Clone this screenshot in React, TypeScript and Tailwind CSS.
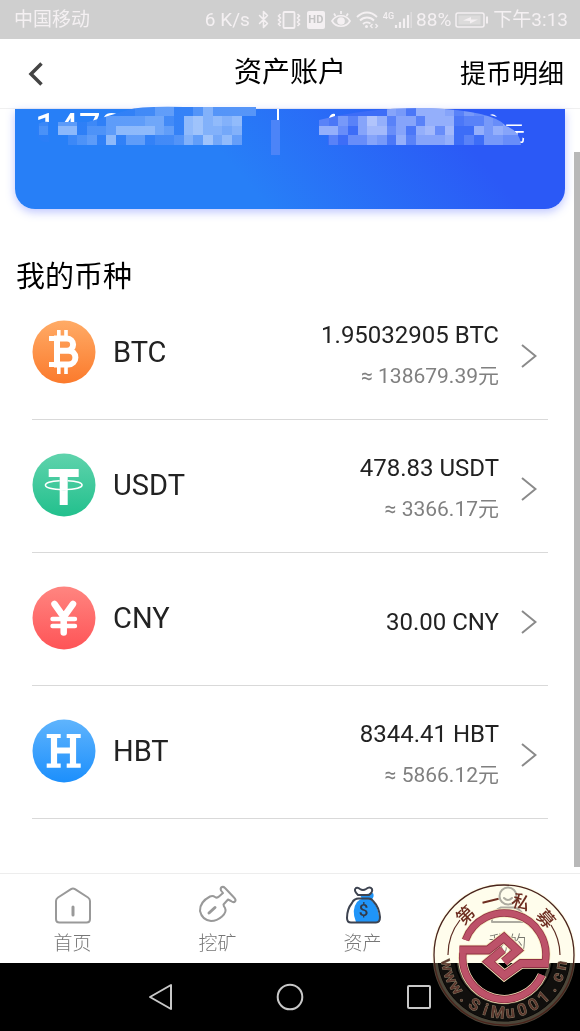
import type { ReactNode } from 'react';
import { Bluetooth } from 'lucide-react';

type Coin = {
    name: string;
    amount: string;
    approx?: string;
    from: string;
    to: string;
    glyph: ReactNode;
};

const coins: Coin[] = [
    {
        name: 'BTC',
        amount: '1.95032905 BTC',
        approx: '≈ 138679.39元',
        from: '#ffab66',
        to: '#fb7a2c',
        glyph: (
            <g fill="none" stroke="#fff">
                <path d="M26.8 10v8M34 10v8M26.8 46v8M34 46v8" strokeWidth="3.6" />
                <path d="M17 18.5h8M17 44.5h8" strokeWidth="5" />
                <path d="M25 18.5h10a6 6 0 0 1 0 12.2H25zM25 30.7h11.5a6.8 6.8 0 0 1 0 13.8H25z" strokeWidth="6" />
            </g>
        ),
    },
    {
        name: 'USDT',
        amount: '478.83 USDT',
        approx: '≈ 3366.17元',
        from: '#5fd3ac',
        to: '#22c08d',
        glyph: (
            <g>
                <path d="M16.7 16h30v8h-11v28h-8V24h-11z" fill="#fff" />
                <path d="M27 36.4q5 .6 9.5 0" fill="none" stroke="#43c99d" strokeWidth="1" />
                <path d="M27.7 27.7C9 28 7 36.5 31.7 36.5s23-8.5 4-8.8" fill="none" stroke="#fff" strokeWidth="1.5" />
            </g>
        ),
    },
    {
        name: 'CNY',
        amount: '30.00 CNY',
        from: '#ff8580',
        to: '#fe5457',
        glyph: (
            <g fill="none" stroke="#fff" strokeLinecap="round" strokeLinejoin="round">
                <path d="M22.5 18l9.2 13 9.300-13M31.700 31v15.500" strokeWidth="6.500" />
                <path d="M20.500 33h22.500M20.500 40h22.500" strokeWidth="4.400" />
            </g>
        ),
    },
    {
        name: 'HBT',
        amount: '8344.41 HBT',
        approx: '≈ 5866.12元',
        from: '#5fb4fd',
        to: '#1c8ffc',
        glyph: (
            <g fill="none" stroke="#fff">
                <path d="M14.7 17h14M34.7 17h14M14.7 46.7h14M34.7 46.7h14" strokeWidth="4.2" />
                <path d="M22 17v30M41 17v30" strokeWidth="6.2" />
                <path d="M22 31.5h19" strokeWidth="6" />
            </g>
        ),
    },
];

// one string per row of blocks, each digit is how light the block is
const leftBlocks = { col: 4, rows: ['....0000001133002522222', '1.33.1.3333441.67565654', '2.660223666643067554565', '0..1230603301125374637'] };
const rightBlocks = { col: 33, rows: ['000000054166652433300', '214258625526661224355', '663057735167370064655', '.20335416255560204433'] };

const Blocks = ({ col, rows }: { col: number; rows: string[] }) => (
    <g fill="#fff">
        {rows.map((row, r) =>
            row.split('').map((level, c) => {
                const n = Number(level);
                if (!n) return null;
                return (
                    <rect
                        key={`${r}-${c}`}
                        x={(col + c) * 9.67}
                        y={(11 + r) * 9.67}
                        width="9.67"
                        height="9.67"
                        opacity={n * 0.075}
                        shapeRendering="crispEdges"
                    />
                );
            })
        )}
    </g>
);

const StatusBar = () => (
    <div className="h-[39px] shrink-0 bg-[#cfcfcf] text-[#f4f0f2] text-[19px] leading-none pl-3.5 pr-3 flex items-center justify-between whitespace-nowrap">
        <span>中国移动</span>
        <div className="flex items-center gap-1">
            <span>6 K/s</span>
            <Bluetooth size={19} strokeWidth={2} />
            <svg width="24" height="20" viewBox="0 0 24 20" fill="none" stroke="currentColor" strokeWidth="1.8">
                <rect x="6.5" y="2" width="11" height="16" rx="1" />
                <path d="M3.5 4l-2 2 2 2-2 2 2 2-2 2 2 2M20.5 4l2 2-2 2 2 2-2 2 2 2-2 2" strokeWidth="1.5" />
            </svg>
            <span className="w-[18px] h-[18px] mx-0.5 rounded-xs bg-[#f4f0f2] text-[#c4c4c4] text-[11px] font-bold flex items-center justify-center">HD</span>
            <svg width="20" height="20" viewBox="0 0 20 20" fill="none" stroke="currentColor" strokeWidth="1.7">
                <path d="M1 11c4-7 14-7 18 0-4 7-14 7-18 0zM10 4V1M4.5 6L3 3.5M15.5 6L17 3.5" />
                <circle cx="10" cy="11" r="3" fill="currentColor" />
            </svg>
            <svg width="24" height="20" viewBox="0 0 24 20" fill="none" stroke="currentColor" strokeWidth="1.8">
                <path d="M2 7c6-6 14-6 20 0M5 10.5c4-4 10-4 14 0M8 14c2-2 5-2 7.5-.5" />
                <circle cx="11.5" cy="16.5" r="1.5" fill="currentColor" stroke="none" />
                <path d="M17.5 14l-2 2 2 2M20.5 14l2 2-2 2" strokeWidth="1.3" />
            </svg>
            <div className="flex">
                <span className="text-[9px] leading-3 font-medium">4G</span>
                <svg width="18" height="20" viewBox="0 0 18 20" fill="none" stroke="currentColor" strokeWidth="2.2">
                    <path d="M2 18v-3M6 18v-6M10 18V8.5M14 18V5" />
                    <path d="M17.5 18V2" opacity=".4" />
                </svg>
            </div>
            <span>88%</span>
            <svg width="34" height="18" viewBox="0 0 34 18" fill="none" stroke="currentColor">
                <rect x="1" y="2" width="28" height="14" rx="2" strokeWidth="1.5" />
                <rect x="3.5" y="4.5" width="22" height="9" fill="currentColor" stroke="none" opacity=".35" />
                <path d="M8 9.5l8-3.500v2.500h7l-8 4V10z" fill="currentColor" stroke="none" />
                <path d="M32 5.500v7" strokeWidth="2" />
            </svg>
            <span>下午3:13</span>
        </div>
    </div>
);

const BalanceCard = () => (
    <section className="relative mx-[15px] h-[100px] rounded-b-[20px] bg-linear-[50deg,#277ff7_40%,#2b59f6_80%] shadow-[0_3px_10px_rgba(90,110,255,0.4)] text-white">
        <div className="flex items-start justify-between pl-5 pr-10 pt-[3px]">
            <span className="text-[39px] leading-8">1478</span>
            <span className="mt-2 text-[22px] leading-7">元</span>
        </div>
        <svg className="absolute left-0 -top-[4px] w-full" viewBox="15 105 550 60" aria-hidden="true">
            <defs>
                <clipPath id="smudgeLeft">
                    <path d="M38 124q5-3 11-2v20h-5q-7-3-7-9zM58 122h30l40-12q12-4 56-3h72v9h-14v29H68V135H58z" />
                </clipPath>
                <clipPath id="smudgeRight">
                    <path d="M319 120q50-13 110-12 65 3 77 18 14 5 15 19H328v-10h-9z" />
                </clipPath>
                <linearGradient id="smudgeBase">
                    <stop offset="0" stopColor="#2a7ef7" />
                    <stop offset="1" stopColor="#3b84f7" />
                </linearGradient>
            </defs>
            <path d="M278 109v12" stroke="#fff" strokeWidth="2" />
            <rect x="271" y="120" width="9" height="35" fill="#4c84f8" />
            <g clipPath="url(#smudgeLeft)">
                <rect x="30" y="105" width="240" height="45" fill="url(#smudgeBase)" />
                <Blocks {...leftBlocks} />
            </g>
            <g clipPath="url(#smudgeRight)">
                <rect x="310" y="105" width="220" height="45" fill="#3d6df7" />
                <Blocks {...rightBlocks} />
            </g>
            <path d="M329 118q2-5 6-4v2zM490 115q4-2 7 2z" fill="#fff" />
        </svg>
    </section>
);

const CoinRow = ({ coin }: { coin: Coin }) => (
    <li>
        <button className="w-full h-[133px] pb-[3px] pr-[11px] flex items-center border-b border-[#d9d9d9] text-left">
            <svg className="size-16 shrink-0" viewBox="0 0 64 64" aria-hidden="true">
                <defs>
                    <linearGradient id={`coin${coin.name}`} x2="0" y2="1">
                        <stop offset="0" stopColor={coin.from} />
                        <stop offset="1" stopColor={coin.to} />
                    </linearGradient>
                </defs>
                <circle cx="32" cy="32" r="31.5" fill={`url(#coin${coin.name})`} />
                {coin.glyph}
            </svg>
            <span className="ml-[17px] text-[29px] leading-9 text-[#222]">{coin.name}</span>
            <span className="ml-auto mt-2 flex flex-col gap-[9px] text-right">
                <span className="text-2xl text-[#222]">{coin.amount}</span>
                {coin.approx && <span className="text-[21px] leading-8 text-[#808080]">{coin.approx}</span>}
            </span>
            <svg className="ml-[22px] mt-2 w-4 h-6" viewBox="0 0 16 24" fill="none" stroke="#8a8a8a" strokeWidth="2" aria-hidden="true">
                <path d="M1 1l13.5 11L1 23" />
            </svg>
        </button>
    </li>
);

const tabs: { label: string; icon: ReactNode }[] = [
    {
        label: '首页',
        icon: (
            <g stroke="#999" strokeWidth="2">
                <path d="M5 11.5L18 3.2q2-1.3 4 0l13 8.3q2 1.3 2 3.5v18q0 3.5-3.5 3.5h-27Q3 36.5 3 33V15q0-2.2 2-3.5z" />
                <path d="M20 21v8" strokeWidth="3" />
            </g>
        ),
    },
    {
        label: '挖矿',
        icon: (
            <g stroke="#999" strokeWidth="2">
                <path d="M12 10.5q3-1 5 .5 2 1.500 4-.5l4-3.500-2-2.500q-1-2.500 1-3.500 1.500-.5 3 1L36 11.500q2.500 2.500 1 4-1.500 1.500-4-.5l-3-1.500-4.500 5q0 1.500 1.500 3.500 2 4-3 8.500-5 4.500-11 4.500-9-1-11-10-.5-9 10-14.500z" />
                <path d="M11 27l6-5.500" strokeWidth="3" />
            </g>
        ),
    },
    {
        label: '资产',
        icon: (
            <g stroke="#3d4350" strokeWidth="2">
                <path d="M17 9l13-2q2 4-2 7 8 6 8.500 22H13q-5-12 1-20 3-3 5-3z" fill="#2095f8" stroke="none" />
                <path d="M15 9Q10 4 13 2q2-1 4 1 3 2 6 0 4-3 6 0 1 3-3 6zM12 13.500q1.500-1 3.500-1h10q3 0 5 3Q36 21 37 31q0 5.500-4 5.500H8Q4 36.500 4 32q0-9 5-15 1-2.500 3-3.500z" />
                <text x="20.500" y="30" textAnchor="middle" fontSize="17" fontWeight="500" fill="#333a48" stroke="none">$</text>
            </g>
        ),
    },
    {
        label: '我的',
        icon: (
            <g stroke="#adadad" strokeWidth="2">
                <circle cx="20" cy="10" r="8.500" />
                <path d="M16 12q4 4 8 0M4 36v-4q2-8 9-10.500h14Q34 24 36 32v4z" />
            </g>
        ),
    },
];

const TabBar = () => (
    <nav className="h-[90px] shrink-0 grid grid-cols-4 bg-white border-t border-[#ededed]">
        {tabs.map(tab => (
            <a key={tab.label} href="#" className="flex flex-col items-center gap-0.5 pt-3 text-[19px] leading-8 font-light text-[#777]">
                <svg className="size-10 overflow-visible" viewBox="0 0 40 40" fill="none" strokeLinecap="round" strokeLinejoin="round" aria-hidden="true">
                    {tab.icon}
                </svg>
                {tab.label}
            </a>
        ))}
    </nav>
);

const SystemNav = () => (
    <div className="h-[68px] shrink-0 bg-black">
        <div className="w-2/3 h-full mx-auto grid grid-cols-3 place-items-center">
            <button aria-label="返回">
                <svg width="28" height="28" viewBox="0 0 28 28" fill="none" stroke="#c8c8c8" strokeWidth="2" strokeLinejoin="round">
                    <path d="M3 14L24 2v24z" />
                </svg>
            </button>
            <button aria-label="主屏幕">
                <svg width="28" height="28" viewBox="0 0 28 28" fill="none" stroke="#c8c8c8" strokeWidth="2">
                    <circle cx="14" cy="14" r="12.3" />
                </svg>
            </button>
            <button aria-label="最近任务">
                <svg width="28" height="28" viewBox="0 0 28 28" fill="none" stroke="#c8c8c8" strokeWidth="2">
                    <rect x="3" y="3" width="22" height="22" rx="1" />
                </svg>
            </button>
        </div>
    </div>
);

const sealTop: [string, number][] = [['第', -44], ['一', -14], ['私', 18], ['募', 49]];
const sealUrl = 'www.SiMu001.cn';

const Seal = () => (
    <>
        <div className="absolute right-1 bottom-1 size-36 rounded-full bg-[#fffdec] mix-blend-multiply pointer-events-none" />
        <svg className="absolute right-1 bottom-1 size-36 pointer-events-none" viewBox="0 0 144 144" fill="none" aria-hidden="true">
            <defs>
                <clipPath id="sealLower">
                    <rect y="80" width="144" height="64" />
                </clipPath>
            </defs>
            <g clipPath="url(#sealLower)" stroke="#8b7f68">
                <circle cx="72" cy="72" r="69" strokeWidth="5" opacity=".55" />
                <circle cx="72" cy="72" r="58" strokeWidth="16" opacity=".12" />
                <circle cx="72" cy="74" r="46" strokeWidth="3" opacity=".5" />
            </g>
            <circle cx="72" cy="72" r="70" stroke="#4a241c" strokeWidth="1.3" />
            <path d="M16 72a56 56 0 0 1 12-35M128 72a56 56 0 0 0-9-30" stroke="#5c2c22" strokeWidth="1.2" />
            {sealTop.map(([ch, deg]) => (
                <text key={ch} x="72" y="23" textAnchor="middle" fontSize="18" fontWeight="500" fill="#6e2d20" transform={`rotate(${deg} 72 72)`}>
                    {ch}
                </text>
            ))}
            <g fontSize="16" fontWeight="500" textAnchor="middle" fill="#5e382e" stroke="#857a64" strokeWidth="1" paintOrder="stroke">
                {sealUrl.split('').map((ch, i) => (
                    <text key={i} x="72" y="135" transform={`rotate(${80 - i * 12.3} 72 72)`}>
                        {ch}
                    </text>
                ))}
            </g>
            {/* two interlocking hooks, each running out into half of the ring */}
            {[
                ['#f4e6b8', 9, 10.5],
                ['#8f3045', 7.5, 8.8],
                ['#bd5269', 6, 7.2],
            ].map(([color, ring, band]) => (
                <g key={color} stroke={String(color)}>
                    <path d="M110 92A41.500 41.500 0 0 1 31 70M33.500 57A41.500 41.500 0 0 1 113 80" strokeWidth={ring} />
                    <path d="M27.500 67H56l16-12.500 13.500 12.800-13.500 11.500" strokeWidth={band} />
                    <path d="M116.500 80.500H89L72.300 92.500l-15.800-13.800 14.500-12.200" strokeWidth={band} />
                </g>
            ))}
        </svg>
    </>
);

export default function App() {
    return (
        <div className="relative min-h-screen flex flex-col bg-white font-[Roboto,'Noto_Sans_CJK_SC',sans-serif]">
            <StatusBar />
            <header className="h-[70px] shrink-0 px-4 grid grid-cols-[1fr_auto_1fr] items-center border-b border-[#f0f0f0] text-black">
                <button className="justify-self-start pl-3" aria-label="返回">
                    <svg width="15" height="24" viewBox="0 0 15 24" fill="none" stroke="#444" strokeWidth="3.5">
                        <path d="M13.5 1.5L3 12l10.5 10.5" />
                    </svg>
                </button>
                <h1 className="text-[28px] leading-9 pb-0.5">资产账户</h1>
                <a href="#" className="justify-self-end text-[26px] leading-9">提币明细</a>
            </header>
            <main className="relative flex-1 pb-10">
                <BalanceCard />
                <h2 className="mt-[58px] px-4 text-[29px] leading-5 text-black">我的币种</h2>
                <ul className="mx-8">
                    {coins.map(coin => (
                        <CoinRow key={coin.name} coin={coin} />
                    ))}
                </ul>
                <div className="absolute right-0 top-[43px] bottom-1.5 w-1.5 bg-[#b8b8b8]" />
            </main>
            <TabBar />
            <SystemNav />
            <Seal />
        </div>
    );
}
